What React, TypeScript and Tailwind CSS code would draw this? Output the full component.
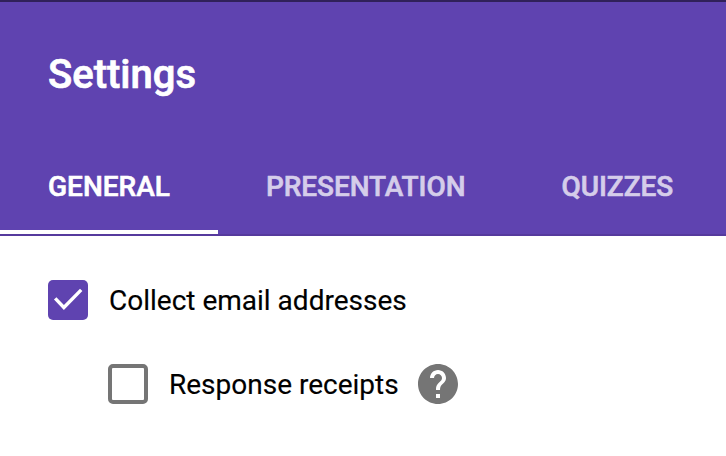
const tabs = [
  { label: "GENERAL", active: true },
  { label: "PRESENTATION", active: false },
  { label: "QUIZZES", active: false },
];

export default function App() {
  return (
    <div className="flex h-[456px] w-[726px] flex-col overflow-hidden bg-white font-[Roboto,sans-serif]">
      <header className="flex h-[236px] shrink-0 flex-col justify-between border-t-2 border-b-2 border-t-[#30215a] border-b-[#563a9d] bg-[#5f43b0]">
        <h1 className="pt-[49px] pl-12 text-[40px] leading-[48px] font-medium text-white [-webkit-text-stroke:0.7px_white]">Settings</h1>
        <nav className="flex h-[96px]">
          {tabs.map((tab) => (
            <button
              key={tab.label}
              className={
                tab.active
                  ? "h-full shrink-0 border-b-4 border-white px-12 pt-[5px] text-[28px] font-medium text-white [-webkit-text-stroke:0.6px_white]"
                  : "h-full shrink-0 border-b-4 border-transparent px-12 pt-[5px] text-[28px] font-medium tracking-[-0.06px] text-[#d5cdea] [-webkit-text-stroke:0.6px_#d5cdea]"
              }
            >
              {tab.label}
            </button>
          ))}
        </nav>
      </header>
      <main className="flex flex-col gap-11 pt-11 pl-12">
        <label className="flex h-10 items-center">
          <span className="flex size-10 items-center justify-center rounded-[5px] bg-[#5f43b0]">
            <svg viewBox="0 0 40 40" className="size-10" fill="none" stroke="white" strokeWidth="3.4">
              <path d="M7.2 18.4 15.9 27.5 33.2 9.9" />
            </svg>
          </span>
          <span className="ml-[21px] pt-0.5 text-[28px] text-black [-webkit-text-stroke:0.15px_black]">Collect email addresses</span>
        </label>
        <div className="flex h-10 items-center pl-[60px]">
          <span className="size-10 rounded-[5px] border-4 border-[#757575]" />
          <span className="ml-[21px] pt-0.5 text-[28px] text-black [-webkit-text-stroke:0.15px_black]">Response receipts</span>
          <svg viewBox="2 2 20 20" className="ml-[19px] size-10" fill="#757575">
            <path d="M12 2C6.48 2 2 6.48 2 12s4.48 10 10 10 10-4.48 10-10S17.52 2 12 2zm1 17h-2v-2h2v2zm2.07-7.75-.9.92C13.45 12.9 13 13.5 13 15h-2v-.5c0-1.1.45-2.1 1.17-2.83l1.24-1.26c.37-.36.59-.86.59-1.41 0-1.1-.9-2-2-2s-2 .9-2 2H8c0-2.21 1.79-4 4-4s4 1.79 4 4c0 .88-.36 1.68-.93 2.25z" />
          </svg>
        </div>
      </main>
    </div>
  );
}
